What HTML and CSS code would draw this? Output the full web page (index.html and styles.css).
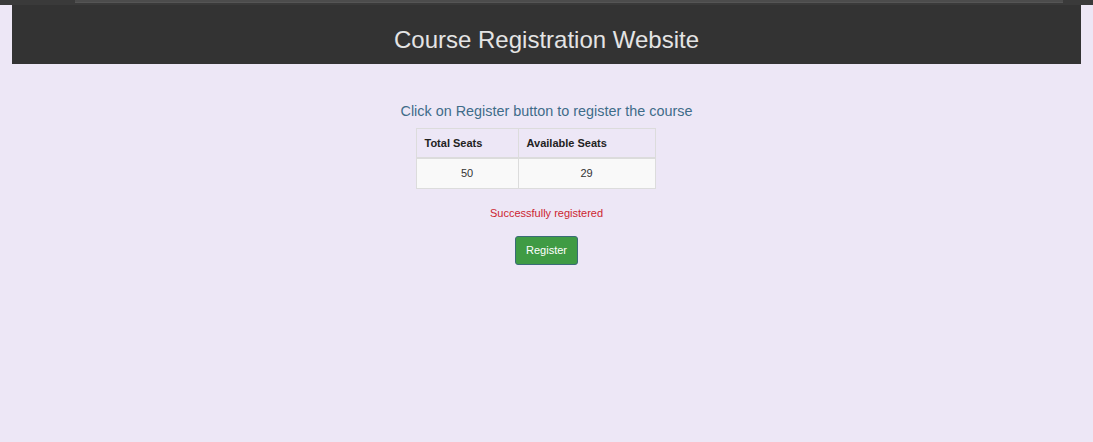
FILE: index.html
```html
<!DOCTYPE html>
<html>
<head>
<meta charset="utf-8">
<link rel="stylesheet" href="styles.css">
</head>
<body>
<div class="topstrip"><div class="tab"></div></div>
<header class="header"><h1 class="title">Course Registration Website</h1></header>
<main class="main">
  <p class="subtitle">Click on Register button to register the course</p>
  <table class="seats">
    <thead>
      <tr><th class="col1">Total Seats</th><th class="col2">Available Seats</th></tr>
    </thead>
    <tbody>
      <tr><td>50</td><td>29</td></tr>
    </tbody>
  </table>
  <p class="message">Successfully registered</p>
  <button class="btn">Register</button>
</main>
</body>
</html>
```

FILE: styles.css
```css
html, body {
  margin: 0;
  padding: 0;
}
body {
  background: #ede7f6;
  font-family: "Liberation Sans", Arial, sans-serif;
  min-height: 442px;
}
.topstrip {
  height: 5px;
  background: #3a3a3a;
  display: flex;
}
.tab {
  margin-left: 75px;
  width: 988px;
  height: 2px;
  background: #4c4c4c;
  border-bottom: 1px solid #555;
}
.header {
  margin: 0 12px;
  height: 59px;
  box-sizing: border-box;
  padding-top: 21px;
  background: #333333;
  text-align: center;
}
.title {
  margin: 0;
  font-size: 24px;
  line-height: 28px;
  font-weight: normal;
  color: #e4e4e4;
}
.main {
  display: flex;
  flex-direction: column;
  align-items: center;
}
.subtitle {
  margin: 38px 0 0;
  font-size: 14.4px;
  line-height: 18px;
  color: #3f6c89;
}
.seats {
  margin: 8px 22px 0 0;
  border-collapse: collapse;
  font-size: 11px;
  color: #333;
}
.seats th, .seats td {
  border: 1px solid #dcdcdc;
  padding: 7px 8px;
  line-height: 14px;
}
.seats th {
  text-align: left;
  font-weight: bold;
  color: #222;
  border-bottom: 2px solid #dcdcdc;
}
.seats td {
  text-align: center;
  background: #f9f9f9;
  padding-top: 7px;
  padding-bottom: 8px;
}
.col1 {
  width: 85px;
}
.col2 {
  width: 120px;
}
.message {
  margin: 16px 0 0;
  font-size: 11px;
  line-height: 16px;
  color: #cc2530;
}
.btn {
  margin-top: 15px;
  font-family: "Liberation Sans", Arial, sans-serif;
  font-size: 11px;
  line-height: 13px;
  padding: 7px 10px;
  color: #fff;
  background: #3f9b44;
  border: 1px solid #3a6b78;
  border-radius: 3px;
}
```
